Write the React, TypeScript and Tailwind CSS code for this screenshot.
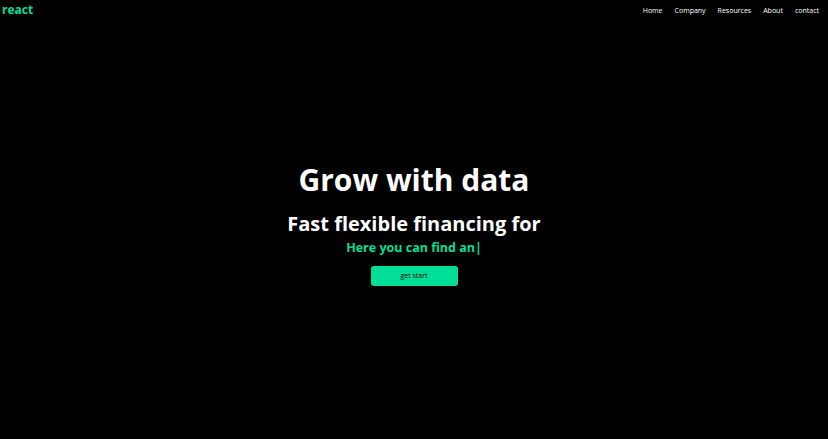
import React from 'react';

const links = ['Home', 'Company', 'Resources', 'About', 'contact'];

function Navbar() {
  return (
    <div className="flex justify-between items-center h-[20px] px-[2px] text-white">
      <h1 className="text-[12px] font-bold text-[#00df9a] leading-none">react</h1>
      <ul className="flex gap-[12px] pr-[7px] text-[7px] leading-none">
        {links.map((l) => (
          <li key={l}>{l}</li>
        ))}
      </ul>
    </div>
  );
}

function Hero() {
  return (
    <div className="h-[419px] flex flex-col items-center text-white text-center pt-[140px]">
      <h1 className="text-[30px] font-bold leading-[40px]">Grow with data</h1>
      <p className="text-[20px] font-bold leading-[28px] mt-[10px]">Fast flexible financing for</p>
      <p className="text-[12.5px] font-bold text-[#00df9a] leading-[20px]">Here you can find an|</p>
      <button className="bg-[#00df9a] w-[87px] h-[20px] rounded-[3px] text-black text-[7px] mt-[8px]">
        get start
      </button>
    </div>
  );
}

export default function App() {
  return (
    <div className="w-full h-[439px] bg-black font-['Open_Sans',sans-serif]">
      <Navbar />
      <Hero />
    </div>
  );
}
